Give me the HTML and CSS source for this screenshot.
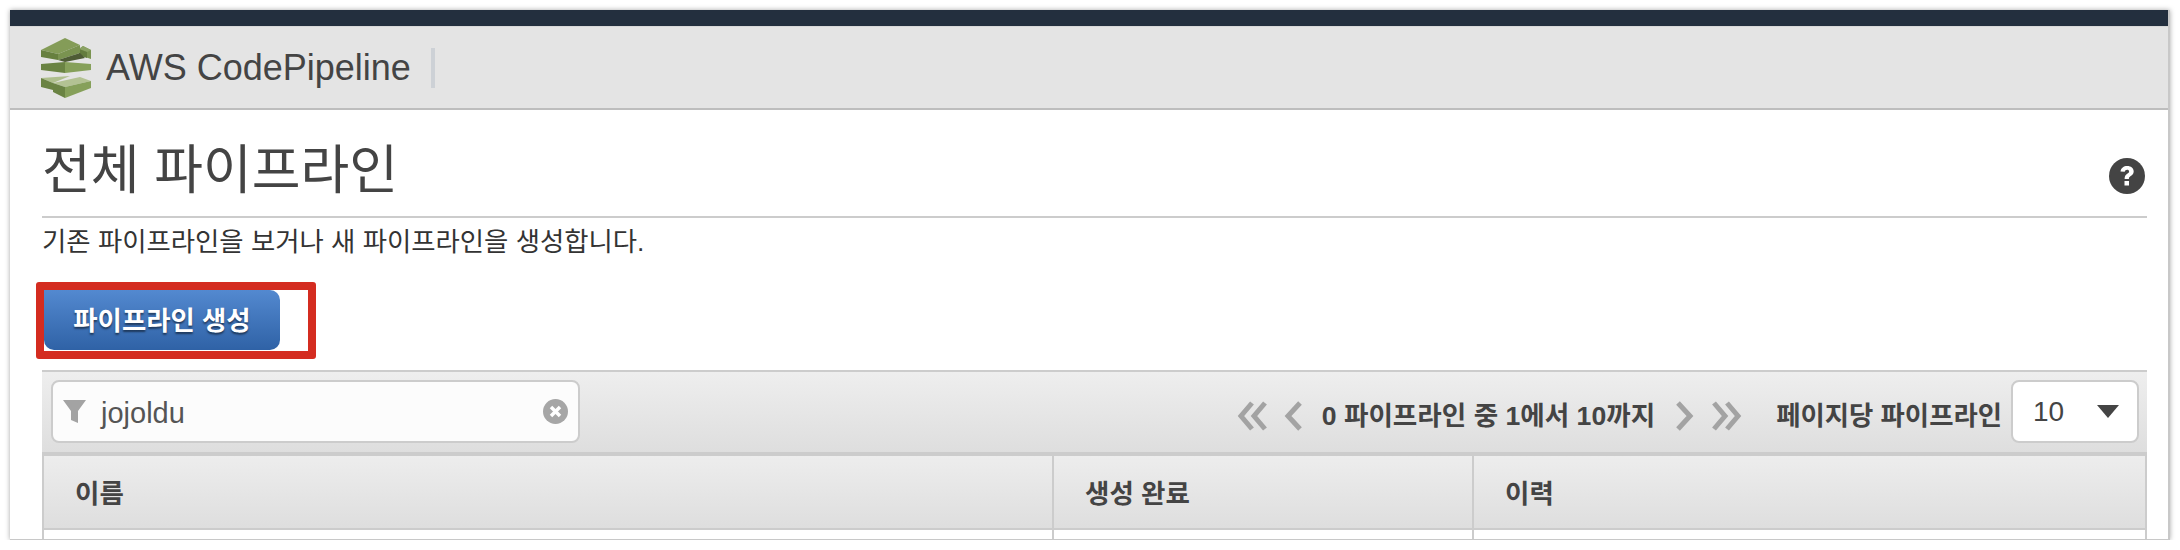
FILE: index.html
```html
<!DOCTYPE html>
<html lang="ko">
<head>
  <meta charset="UTF-8" />
  <title>AWS CodePipeline</title>
  <link rel="stylesheet" href="styles.css">
</head>
<body>
  <div class="window">
    <div class="topbar"></div>
    <div class="header">
      <svg class="logo" viewBox="0 0 50 60" width="50" height="60">
        <polygon points="38,11 42,8 50,12 50,21 38,17" fill="#7a9350"/>
        <polygon points="38,11 42,8 50,12 46,14" fill="#8ba264"/>
        <polygon points="38,11 46,14 46,20 38,17" fill="#647c3e"/>
        <polygon points="0,12 24,0 39,7 17,16" fill="#849c58"/>
        <polygon points="0,12 17,16 17,22 0,19" fill="#67803f"/>
        <polygon points="17,16 39,7 39,15 17,22" fill="#7a9350"/>
        <polygon points="17,22 39,15 44,20 24,24" fill="#4e5c35"/>
        <polygon points="0,26 24,24 24,35 0,32" fill="#6a8343"/>
        <polygon points="24,24 50,26 50,32 24,35" fill="#86a05a"/>
        <polygon points="0,40 29,38 12,45" fill="#aebf8d"/>
        <polygon points="0,40 12,45 12,52 0,49" fill="#6a8343"/>
        <polygon points="12,45 39,39 50,43 24,49" fill="#b3c293"/>
        <polygon points="12,45 24,49 24,60 12,54" fill="#6a8343"/>
        <polygon points="24,49 50,43 50,50 24,60" fill="#86a05a"/>
      </svg>
      <span class="brand">AWS CodePipeline</span>
      <span class="brand-sep"></span>
    </div>

    <div class="content">
      <div class="title-row">
        <h1>전체 파이프라인</h1>
        <svg class="help" viewBox="0 0 36 36" width="36" height="36">
          <circle cx="18" cy="18" r="18" fill="#444"/>
          <path d="M11.5 13.5c.5-3.6 3.2-5.5 6.7-5.5 3.800 0 6.500 2.200 6.500 5.300 0 2.500-1.400 3.700-3 4.800-1.300.900-1.800 1.500-1.800 2.900h-4.300c0-2.700.800-3.900 2.600-5.200 1.200-.900 1.900-1.400 1.900-2.400 0-1-.800-1.700-2-1.700-1.300 0-2.100.700-2.400 2.100z" fill="#fff"/>
          <rect x="15.500" y="23" width="4.500" height="4.500" fill="#fff"/>
        </svg>
      </div>
      <p class="desc">기존 파이프라인을 보거나 새 파이프라인을 생성합니다.</p>

      <div class="callout">
        <button class="primary">파이프라인 생성</button>
      </div>

      <div class="table">
        <div class="toolbar">
          <div class="filter">
            <svg class="filter-icon" viewBox="0 0 23 23" width="23" height="23">
              <polygon points="0,0 23,0 15,11 15,23 8,20 8,11" fill="#a3a3a3"/>
            </svg>
            <span class="filter-text">jojoldu</span>
            <svg class="clear-icon" viewBox="0 0 25 25" width="25" height="25">
              <circle cx="12.500" cy="12.500" r="12.500" fill="#a6a6a6"/>
              <path d="M8 8l9 9M17 8l-9 9" stroke="#fff" stroke-width="3.500"/>
            </svg>
          </div>
          <div class="pager">
            <svg class="chev" viewBox="0 0 31 30" width="31" height="30">
              <path d="M15 2L4 15l11 13M28 2L17 15l11 13" fill="none" stroke="#a3a3a3" stroke-width="5"/>
            </svg>
            <svg class="chev chev-one" viewBox="0 0 20 30" width="20" height="30">
              <path d="M17 2L5 15l12 13" fill="none" stroke="#a3a3a3" stroke-width="5"/>
            </svg>
            <span class="pager-text">0 파이프라인 중 1에서 10까지</span>
            <svg class="chev chev-next" viewBox="0 0 20 30" width="20" height="30">
              <path d="M3 2l12 13L3 28" fill="none" stroke="#a3a3a3" stroke-width="5"/>
            </svg>
            <svg class="chev" viewBox="0 0 31 30" width="31" height="30">
              <path d="M3 2l11 13L3 28M16 2l11 13-11 13" fill="none" stroke="#a3a3a3" stroke-width="5"/>
            </svg>
            <span class="per-page">페이지당 파이프라인</span>
            <div class="select">
              <span>10</span>
              <span class="caret"></span>
            </div>
          </div>
        </div>
        <div class="thead">
          <div class="th">이름</div>
          <div class="th">생성 완료</div>
          <div class="th">이력</div>
        </div>
        <div class="tbody">
          <div class="td"></div>
          <div class="td"></div>
          <div class="td"></div>
        </div>
      </div>
    </div>
  </div>
</body>
</html>
```

FILE: styles.css
```css
body {
  margin: 0;
  background: #fff;
  font-family: "Liberation Sans", "Noto Sans CJK KR", sans-serif;
  color: #444;
}
.window {
  margin: 10px 10px 0;
  height: 530px;
  box-sizing: border-box;
  border-right: 2px solid #c8c8c8;
  border-bottom: 1px solid #c8c8c8;
  box-shadow: 0 0 5px rgba(0,0,0,0.35);
  overflow: hidden;
  background: #fff;
}
.topbar {
  height: 16px;
  background: #232f3e;
}
.header {
  height: 84px;
  box-sizing: border-box;
  background: #e4e4e4;
  border-top: 1px solid #d8d8d8;
  border-bottom: 2px solid #bdbdbd;
  display: flex;
  align-items: center;
  padding-left: 31px;
}
.brand {
  font-size: 36px;
  margin-left: 15px;
  color: #444;
}
.brand-sep {
  width: 4px;
  height: 40px;
  margin-left: 20px;
  background: #cdd1d6;
}
.content {
  padding: 0 21px 0 32px;
}
.title-row {
  height: 108px;
  box-sizing: border-box;
  border-bottom: 2px solid #ccc;
  display: flex;
  justify-content: space-between;
  align-items: flex-end;
  padding-bottom: 22px;
}
h1 {
  margin: 0;
  font-weight: 400;
  font-size: 53px;
  line-height: 46px;
  color: #444;
}
.help {
  margin-right: 2px;
}
.desc {
  margin: 6px 0 0;
  font-size: 26.4px;
  line-height: 36px;
  color: #333;
}
.callout {
  margin: 22px 0 0 -6px;
  width: 264px;
  height: 61px;
  border: 8px solid #d42c20;
  border-radius: 3px;
}
.primary {
  display: block;
  width: 236px;
  height: 60px;
  padding: 0 0 3px;
  border: none;
  border-radius: 0 10px 10px 10px;
  background: linear-gradient(#5389d0, #2f62a6);
  color: #fff;
  font-family: inherit;
  font-size: 26.4px;
  font-weight: 700;
  text-shadow: 0 2px 2px rgba(0,0,0,0.5);
}
.table {
  margin-top: 11px;
}
.toolbar {
  height: 86px;
  box-sizing: border-box;
  border-top: 2px solid #ccc;
  border-bottom: 4px solid #ccc;
  background: linear-gradient(#eeeeee, #dedede);
  display: flex;
  justify-content: space-between;
  padding: 8px 8px 0 9px;
}
.filter {
  width: 529px;
  height: 63px;
  box-sizing: border-box;
  border: 2px solid #ccc;
  border-radius: 8px;
  background: #fcfcfc;
  display: flex;
  align-items: center;
  padding: 0 10px;
}
.filter-text {
  margin-left: 15px;
  padding-top: 3px;
  font-size: 29px;
  color: #555;
  flex: 1;
}
.pager {
  display: flex;
  align-items: center;
  height: 63px;
}
.chev {
  margin-top: 8px;
}
.chev-one {
  margin-left: 15px;
}
.chev-next {
  margin-left: 20px;
  margin-right: 16px;
}
.pager-text {
  margin-left: 19px;
  padding-top: 3px;
  font-size: 26.6px;
  font-weight: 700;
  color: #444;
}
.per-page {
  margin-left: 34px;
  padding-top: 3px;
  font-size: 26.4px;
  font-weight: 700;
  color: #444;
}
.select {
  margin-left: 9px;
  width: 128px;
  height: 63px;
  box-sizing: border-box;
  border: 2px solid #ccc;
  border-radius: 8px;
  background: #fff;
  display: flex;
  align-items: center;
  padding: 0 18px 0 20px;
  justify-content: space-between;
  font-size: 28px;
}
.caret {
  width: 0;
  height: 0;
  border-left: 11px solid transparent;
  border-right: 11px solid transparent;
  border-top: 13px solid #444;
}
.thead, .tbody {
  display: grid;
  grid-template-columns: 1010px 420px 1fr;
}
.th {
  height: 74px;
  box-sizing: border-box;
  border-left: 2px solid #ccc;
  border-bottom: 2px solid #ccc;
  background: linear-gradient(#ededed, #dedede);
  padding: 0 0 2px 31px;
  display: flex;
  align-items: center;
  font-size: 26.5px;
  font-weight: 700;
  color: #444;
}
.th:last-child, .td:last-child {
  border-right: 2px solid #ccc;
}
.td {
  height: 20px;
  border-left: 2px solid #ccc;
}
```
